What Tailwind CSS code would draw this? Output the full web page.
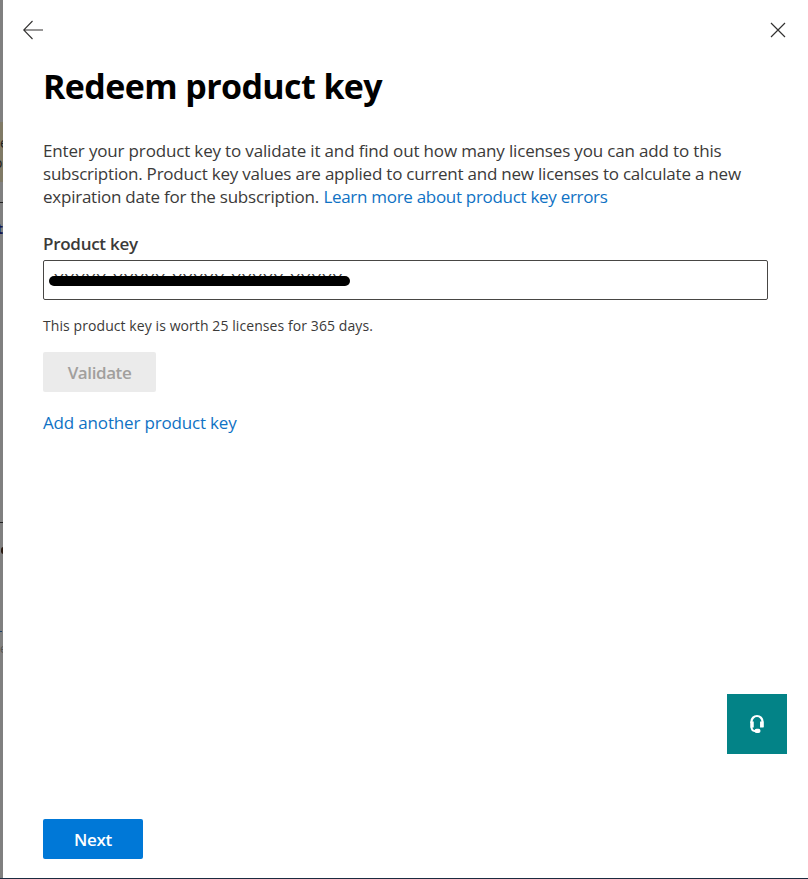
<!DOCTYPE html>
<html lang="en">
<head>
  <meta charset="UTF-8">
  <meta name="viewport" content="width=device-width, initial-scale=1.0">
  <title>Redeem product key</title>
  <script src="https://cdn.jsdelivr.net/npm/@tailwindcss/browser@4"></script>
</head>
<body class="h-[879px] overflow-hidden bg-white font-['Open_Sans','Noto_Sans',sans-serif] text-[#3b3a39]">
  <div class="flex h-[878px]">
    <!-- dimmed page behind the panel -->
    <div class="relative w-[3px] shrink-0 overflow-hidden bg-[#808080] text-[14px] leading-none">
      <div class="absolute top-[122px] h-[60px] w-full bg-[#807a66]"></div>
      <span class="absolute top-[136px] left-0 text-[#222]">e</span>
      <span class="absolute top-[156px] -left-[6px] text-[#222]">o</span>
      <div class="absolute top-[202px] h-px w-full bg-[#222]"></div>
      <span class="absolute top-[222px] -left-[3px] font-bold text-[#151550]">t</span>
      <div class="absolute top-[522px] h-px w-full bg-[#222]"></div>
      <div class="absolute top-[547px] left-[1px] h-[7px] w-[5px] rounded-full bg-[#2a1a10]"></div>
      <div class="absolute top-[631px] h-px w-[2px] bg-[#1b3f66]"></div>
      <span class="absolute top-[643px] left-0 text-[12px] text-[#555]">e</span>
    </div>

    <main class="flex flex-1 flex-col pr-[21px] pl-10">
      <header class="flex h-[60px] items-center justify-between">
        <button class="-ml-5" aria-label="Back">
          <svg class="h-5 w-5" viewBox="0 0 20 20" fill="none" stroke="#323130" stroke-width="1.1"><path d="M20 10H.8M9.500 1 .7 10l8.800 9"/></svg>
        </button>
        <button aria-label="Close">
          <svg class="h-[18px] w-[18px]" viewBox="0 0 18 18" fill="none" stroke="#323130" stroke-width="1.200"><path d="M2 2l14 14M16 2 2 16"/></svg>
        </button>
      </header>

      <h1 class="mt-[2px] text-[34px] leading-[48px] font-bold tracking-[-0.6px] whitespace-nowrap text-black">Redeem product key</h1>

      <p class="mt-[29px] text-[17px] leading-[23px] whitespace-nowrap">
        <span class="tracking-[-0.16px]">Enter your product key to validate it and find out how many licenses you can add to this</span><br>
        <span class="tracking-[-0.22px]">subscription. Product key values are applied to current and new licenses to calculate a new</span><br>
        <span class="tracking-[-0.24px]">expiration date for the subscription.</span> <a class="tracking-[-0.3px] text-[#0f72c4]">Learn more about product key errors</a>
      </p>

      <label class="mt-[24px] text-[17px] leading-[23px] font-semibold tracking-[-0.27px]">Product key</label>
      <div class="relative mt-[5px] flex h-10 w-[725px] items-center rounded-[2px] border border-[#484644] px-[10px]">
        <span class="text-[17px] tracking-[0.75px]">XXXXX-XXXXX-XXXXX-XXXXX-XXXXX</span>
        <div class="absolute top-[15px] left-[5px] h-[10px] w-[301px] rounded-full bg-black"></div>
      </div>
      <p class="mt-[16px] text-[14px] leading-[20px] tracking-[0.08px]">This product key is worth 25 licenses for 365 days.</p>

      <button class="mt-[16px] h-10 w-[113px] rounded-[2px] bg-[#ebebeb] pt-px text-[17px] font-semibold tracking-[-0.4px] text-[#a19f9d]">Validate</button>
      <a class="mt-[19px] text-[17px] leading-[24px] tracking-[-0.17px] text-[#0f72c4]">Add another product key</a>

      <button class="mt-auto flex h-[60px] w-[60px] items-center justify-center self-end bg-[#038387]" aria-label="Help">
        <svg class="h-[20px] w-[16px]" viewBox="0 0 16 20" fill="none" stroke="#fff">
          <path stroke-width="2.200" d="M2.500 9V7.500a5.500 5.500 0 0 1 11 0V13"/>
          <path stroke-width="3.500" d="M3 7.500V13.500M12.800 7.500V13.500"/>
          <path stroke-width="2" d="M2.500 13c0 2.800 1.600 4.200 4.500 4.200"/>
          <rect x="5.500" y="14.800" width="6" height="4.200" rx="2" fill="#fff" stroke="none"/>
        </svg>
      </button>
      <button class="mt-[65px] mb-[19px] h-10 w-[100px] shrink-0 rounded-[2px] bg-[#0078d7] pt-px text-[17px] font-semibold tracking-[-0.3px] text-white">Next</button>
    </main>
  </div>
  <div class="h-px bg-[#1b2b40]"></div>
</body>
</html>
